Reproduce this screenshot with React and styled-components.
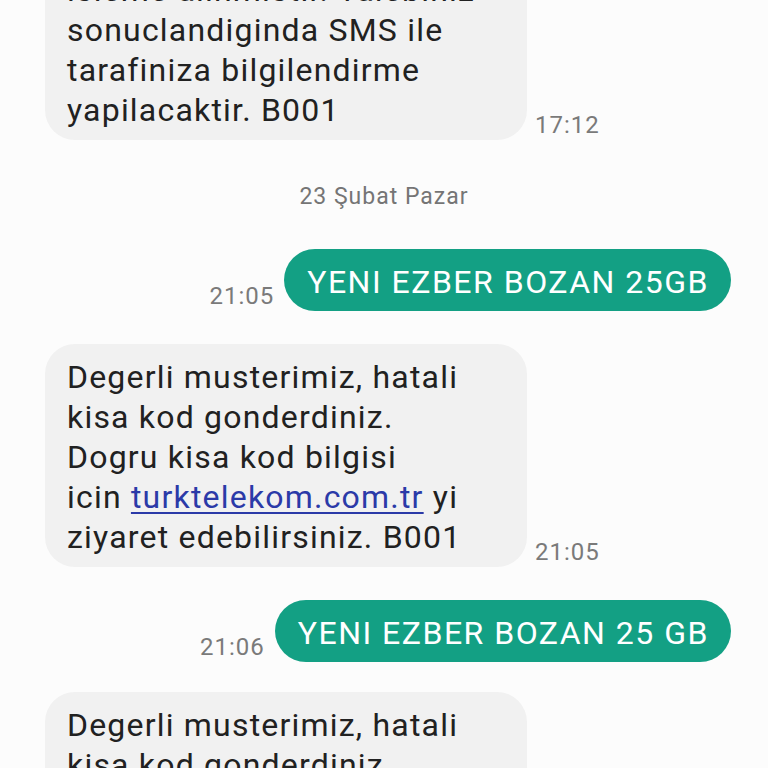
import React from "react";
import styled, { createGlobalStyle } from "styled-components";

const Global = createGlobalStyle`
  html, body {
    margin: 0;
    padding: 0;
    background: #fcfcfc;
    height: 768px;
    overflow: hidden;
  }
  body {
    font-family: Roboto, "Noto Sans", "Liberation Sans", sans-serif;
    -webkit-font-smoothing: antialiased;
  }
`;

const Thread = styled.div`
  display: flex;
  flex-direction: column;
  margin-top: -43px;
`;

const Row = styled.div`
  display: flex;
  align-items: flex-end;
  justify-content: ${(p) => (p.$out ? "flex-end" : "flex-start")};
  padding: ${(p) => (p.$out ? "0 37px 0 0" : "0 0 0 45px")};
  margin-top: ${(p) => p.$mt || 0}px;
`;

const Received = styled.div`
  width: 482px;
  box-sizing: border-box;
  background: #f1f1f1;
  border-radius: 30px;
  padding: 13px 16px 10px 22px;
  font-size: 32px;
  letter-spacing: 1.2px;
  line-height: 40px;
  color: #212121;
  white-space: nowrap;
`;

const Sent = styled.div`
  background: #13a084;
  border-radius: 31px;
  padding: 13px 22px 9px 23px;
  font-size: 32px;
  letter-spacing: 1.5px;
  line-height: 40px;
  color: #ffffff;
  white-space: nowrap;
`;

const Time = styled.span`
  font-size: 24px;
  letter-spacing: 1px;
  line-height: 28px;
  color: #7a7a7a;
  margin: ${(p) => (p.$out ? "0 10px 1px 0" : "0 0 1px 8px")};
  white-space: nowrap;
`;

const DateLine = styled.div`
  text-align: center;
  font-size: 23px;
  letter-spacing: 1px;
  line-height: 30px;
  color: #757575;
  margin-top: 42px;
`;

const Link = styled.a`
  color: #2b3aa8;
  text-decoration: underline;
  text-decoration-thickness: 2px;
  text-underline-offset: 4px;
`;

const Lines = ({ lines }) =>
  lines.map((l, i) => (
    <React.Fragment key={i}>
      {l}
      {i < lines.length - 1 && <br />}
    </React.Fragment>
  ));

const errorLines = [
  "Degerli musterimiz, hatali",
  "kisa kod gonderdiniz.",
  "Dogru kisa kod bilgisi",
  <>
    icin <Link href="#">turktelekom.com.tr</Link> yi
  </>,
  "ziyaret edebilirsiniz. B001",
];

export default function App() {
  return (
    <>
      <Global />
      <Thread>
        <Row>
          <Received>
            <Lines
              lines={[
                "isleme alinmistir. Talebiniz",
                "sonuclandiginda SMS ile",
                "tarafiniza bilgilendirme",
                "yapilacaktir. B001",
              ]}
            />
          </Received>
          <Time>17:12</Time>
        </Row>
        <DateLine>23 Şubat Pazar</DateLine>
        <Row $out $mt={37}>
          <Time $out>21:05</Time>
          <Sent>YENI EZBER BOZAN 25GB</Sent>
        </Row>
        <Row $mt={33}>
          <Received>
            <Lines lines={errorLines} />
          </Received>
          <Time>21:05</Time>
        </Row>
        <Row $out $mt={33}>
          <Time $out>21:06</Time>
          <Sent>YENI EZBER BOZAN 25 GB</Sent>
        </Row>
        <Row $mt={30}>
          <Received>
            <Lines lines={errorLines} />
          </Received>
          <Time>21:06</Time>
        </Row>
      </Thread>
    </>
  );
}
